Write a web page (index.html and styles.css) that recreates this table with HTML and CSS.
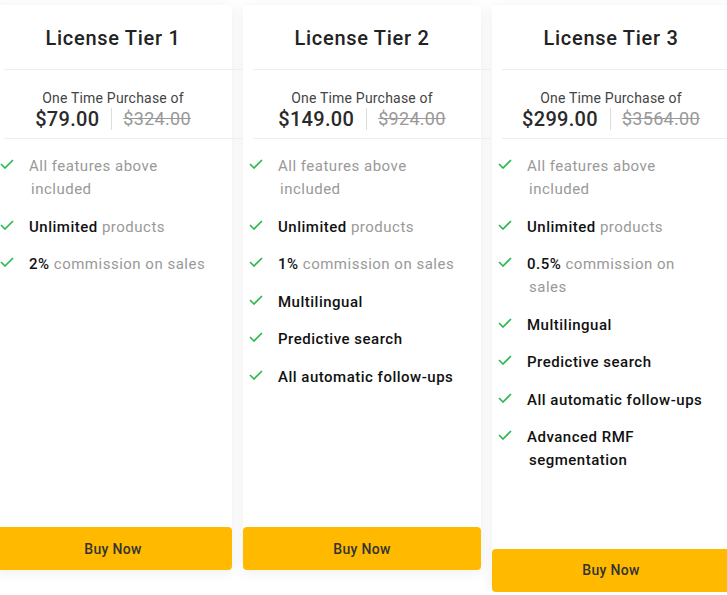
FILE: index.html
```html
<!DOCTYPE html>
<html lang="en">

<head>
    <meta charset="UTF-8">
    <meta name="viewport" content="width=device-width, initial-scale=1.0">
    <title>License Tiers</title>
    <link rel="stylesheet" href="styles.css">
</head>

<body>

    <div class="tiers">

        <div class="card">
            <div class="card-head">License Tier 1</div>
            <div class="price-box">
                <div class="price-label">One Time Purchase of</div>
                <div class="price-row">
                    <span class="price">$79.00</span>
                    <span class="price-old">$324.00</span>
                </div>
            </div>
            <ul class="features">
                <li><svg class="tick" viewBox="0 0 14 10"><path d="M1 5 L5 9 L13 1"/></svg><span class="muted">All features above included</span></li>
                <li><svg class="tick" viewBox="0 0 14 10"><path d="M1 5 L5 9 L13 1"/></svg><b>Unlimited</b> <span class="muted">products</span></li>
                <li><svg class="tick" viewBox="0 0 14 10"><path d="M1 5 L5 9 L13 1"/></svg><b>2%</b> <span class="muted">commission on sales</span></li>
            </ul>
            <button class="buy">Buy Now</button>
        </div>

        <div class="card">
            <div class="card-head">License Tier 2</div>
            <div class="price-box">
                <div class="price-label">One Time Purchase of</div>
                <div class="price-row">
                    <span class="price">$149.00</span>
                    <span class="price-old">$924.00</span>
                </div>
            </div>
            <ul class="features">
                <li><svg class="tick" viewBox="0 0 14 10"><path d="M1 5 L5 9 L13 1"/></svg><span class="muted">All features above included</span></li>
                <li><svg class="tick" viewBox="0 0 14 10"><path d="M1 5 L5 9 L13 1"/></svg><b>Unlimited</b> <span class="muted">products</span></li>
                <li><svg class="tick" viewBox="0 0 14 10"><path d="M1 5 L5 9 L13 1"/></svg><b>1%</b> <span class="muted">commission on sales</span></li>
                <li><svg class="tick" viewBox="0 0 14 10"><path d="M1 5 L5 9 L13 1"/></svg><b>Multilingual</b></li>
                <li><svg class="tick" viewBox="0 0 14 10"><path d="M1 5 L5 9 L13 1"/></svg><b>Predictive search</b></li>
                <li><svg class="tick" viewBox="0 0 14 10"><path d="M1 5 L5 9 L13 1"/></svg><b>All automatic follow-ups</b></li>
            </ul>
            <button class="buy">Buy Now</button>
        </div>

        <div class="card">
            <div class="card-head">License Tier 3</div>
            <div class="price-box">
                <div class="price-label">One Time Purchase of</div>
                <div class="price-row">
                    <span class="price">$299.00</span>
                    <span class="price-old">$3564.00</span>
                </div>
            </div>
            <ul class="features">
                <li><svg class="tick" viewBox="0 0 14 10"><path d="M1 5 L5 9 L13 1"/></svg><span class="muted">All features above included</span></li>
                <li><svg class="tick" viewBox="0 0 14 10"><path d="M1 5 L5 9 L13 1"/></svg><b>Unlimited</b> <span class="muted">products</span></li>
                <li><svg class="tick" viewBox="0 0 14 10"><path d="M1 5 L5 9 L13 1"/></svg><b>0.5%</b> <span class="muted">commission on sales</span></li>
                <li><svg class="tick" viewBox="0 0 14 10"><path d="M1 5 L5 9 L13 1"/></svg><b>Multilingual</b></li>
                <li><svg class="tick" viewBox="0 0 14 10"><path d="M1 5 L5 9 L13 1"/></svg><b>Predictive search</b></li>
                <li><svg class="tick" viewBox="0 0 14 10"><path d="M1 5 L5 9 L13 1"/></svg><b>All automatic follow-ups</b></li>
                <li><svg class="tick" viewBox="0 0 14 10"><path d="M1 5 L5 9 L13 1"/></svg><b>Advanced RMF segmentation</b></li>
            </ul>
            <button class="buy">Buy Now</button>
        </div>

    </div>

</body>

</html>
```

FILE: styles.css
```css
body {
    font-family: 'Roboto', 'Liberation Sans', sans-serif;
    margin: 0;
    padding: 0;
    background: #fff;
    color: #222;
    overflow: hidden;
}

.tiers {
    display: flex;
    align-items: flex-start;
    gap: 11px;
    margin: 5px 0 0 -6px;
}

.card {
    flex: 0 0 238px;
    background: #fff;
    border-radius: 4px;
    box-shadow: 0 2px 14px rgba(0, 0, 0, 0.07);
}

.card-head {
    height: 64px;
    line-height: 66px;
    text-align: center;
    font-size: 20px;
    font-weight: 500;
    color: #222;
    letter-spacing: 0.7px;
}

/* separators sit a little to the right of the card */
.price-box,
.features {
    position: relative;
}

.price-box::before,
.features::before {
    content: "";
    position: absolute;
    top: 0;
    left: 10px;
    width: 100%;
    height: 1px;
    background: #eeeeee;
}

.price-box {
    height: 69px;
    padding-top: 19px;
    box-sizing: border-box;
    text-align: center;
}

.price-label {
    font-size: 14px;
    color: #444;
    line-height: 20px;
    letter-spacing: 0.2px;
}

.price-row {
    display: flex;
    justify-content: center;
    align-items: center;
}

.price {
    font-size: 20px;
    font-weight: 500;
    color: #2a2a2a;
    padding-right: 12px;
    border-right: 1px solid #ddd;
    line-height: 22px;
    letter-spacing: 0.3px;
}

.price-old {
    font-size: 18px;
    color: #999;
    text-decoration: line-through;
    padding-left: 11px;
    line-height: 22px;
    letter-spacing: 0.3px;
}

.features {
    list-style: none;
    margin: 0;
    padding: 17px 22px 62px 35px;
    min-height: 389px;
    box-sizing: border-box;
}

.features li {
    position: relative;
    font-size: 15px;
    line-height: 23px;
    letter-spacing: 0.5px;
    margin-bottom: 14.5px;
    padding-left: 2px;
    text-indent: -2px;
    color: #111;
}

.tick {
    position: absolute;
    left: -29px;
    top: 4px;
    width: 14px;
    height: 10px;
    fill: none;
    stroke: #26b94a;
    stroke-width: 1.6;
}

.features b {
    font-weight: 500;
}

.muted {
    color: #999;
}

.buy {
    display: block;
    width: 100%;
    height: 43px;
    border: none;
    border-radius: 4px;
    background: #ffba00;
    color: #333;
    font-family: inherit;
    font-size: 14px;
    font-weight: 500;
    letter-spacing: 0.3px;
    cursor: pointer;
}
```
